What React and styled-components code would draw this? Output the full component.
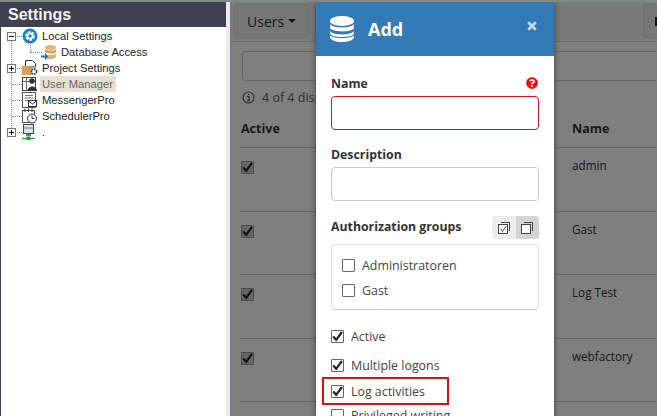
import React from 'react'
import styled, { createGlobalStyle } from 'styled-components'
import { FaQuestionCircle } from 'react-icons/fa'

const Global = createGlobalStyle`
    html, body {
        margin:0;
        padding:0;
        overflow:hidden;
        background-color:#fff;
    }
`

// Page frame
const Page = styled.div`
    width:657px;
    height:416px;
    overflow:hidden;
    display:flex;
    flex-direction:column;
    font-family:"Open Sans", "Liberation Sans", sans-serif;
`
const TopEdge = styled.div`
    height:2px;
    flex:none;
    background-color:#7f8a84;
`
const Body = styled.div`
    flex:1;
    display:flex;
    min-height:0;
`

// Left tree
const Sidebar = styled.aside`
    width:226px;
    flex:none;
    display:flex;
    flex-direction:column;
    background-color:#fff;
    box-sizing:border-box;
    border-left:1px solid #3f4050;
`
const SidebarTitle = styled.h1`
    margin:0;
    height:25px;
    padding-left:7px;
    background-color:#3f4050;
    color:#f2f2f2;
    font:bold 16px/25px "Liberation Sans", sans-serif;
`
const Tree = styled.ul`
    position:relative;
    margin:0;
    padding:1px 0 0;
    list-style:none;
    font:11.2px "Liberation Sans", sans-serif;
    color:#222;
    &::before {
        content:"";
        position:absolute;
        left:10px;
        top:9px;
        height:96px;
        border-left:1px dotted #888;
    }
`
const TreeRow = styled.li`
    position:relative;
    height:16px;
    display:flex;
    align-items:center;
    padding-left:${p => (p.$level ? 40 : 21)}px;
    &::before {
        content:"";
        position:absolute;
        left:${p => (p.$level ? 29 : 11)}px;
        top:8px;
        width:${p => (p.$level ? 12 : 10)}px;
        border-top:1px dotted #888;
    }
    ${p => p.$level ? `
    &::after {
        content:"";
        position:absolute;
        left:29px;
        top:-1px;
        height:9px;
        border-left:1px dotted #888;
    }` : ''}
`
const Toggle = styled.span`
    position:absolute;
    left:6px;
    top:4px;
    z-index:1;
    width:7px;
    height:7px;
    border:1px solid #777;
    background-color:#fff;
    &::before {
        content:"";
        position:absolute;
        left:1px;
        right:1px;
        top:3px;
        height:1px;
        background-color:#111;
    }
    ${p => p.$open ? '' : `
    &::after {
        content:"";
        position:absolute;
        top:1px;
        bottom:1px;
        left:3px;
        width:1px;
        background-color:#111;
    }`}
`
const TreeIcon = styled.svg`
    position:relative;
    width:16px;
    height:16px;
    flex:none;
    margin-right:4px;
`
const TreeLabel = styled.span`
    line-height:16px;
    ${p => p.$selected ? `
    background-color:#e8e0d3;
    color:#666;
    padding:0 3px 0 2px;
    margin-left:-2px;
    ` : ''}
`
const Splitter = styled.div`
    width:4px;
    flex:none;
    background-color:#ebebf3;
    border-right:1px solid #777;
`

// Right pane, dimmed by the dialog backdrop
const Main = styled.main`
    position:relative;
    flex:1;
    min-width:0;
    overflow:hidden;
    background-color:#fff;
    color:#333;
`
const Backdrop = styled.div`
    position:absolute;
    inset:0;
    background-color:rgba(0,0,0,0.5);
`
const Toolbar = styled.div`
    height:40px;
    box-sizing:border-box;
    display:flex;
    gap:6px;
    padding:2px 0 0 3px;
    background-color:#f4f4f4;
    border-bottom:1px solid #ddd;
`
const ToolButton = styled.div`
    height:34px;
    box-sizing:border-box;
    display:flex;
    align-items:center;
    gap:4px;
    padding:0 12px;
    font-size:14px;
    background-color:#eee;
    border:1px solid #ddd;
    border-radius:4px;
`
const EdgeButton = styled(ToolButton)`
    width:14px;
    margin-left:auto;
    padding:0 0 0 11px;
    border-right:0;
    border-radius:4px 0 0 4px;
`
const EdgeGlyph = styled.span`
    flex:none;
    width:3px;
    height:9px;
    background-color:#222;
`
const Caret = styled.span`
    width:0;
    height:0;
    border-left:4px solid transparent;
    border-right:4px solid transparent;
    border-top:4px solid #333;
`
const Content = styled.div`
    padding:9px 0 0 11px;
`
const Search = styled.div`
    height:30px;
    box-sizing:border-box;
    border:1px solid #ccc;
    border-right:0;
    border-radius:4px 0 0 4px;
    background-color:#fff;
`
const Info = styled.div`
    display:flex;
    align-items:center;
    gap:7px;
    height:16px;
    margin-top:8px;
    font-size:12.5px;
    color:#55606b;
`
const Grid = styled.div`
    margin:16px 0 0 -2px;
    display:grid;
    grid-template-columns:331px 1fr;
`
const HeadCell = styled.div`
    height:26px;
    padding:0 0 0 1px;
    font-weight:700;
    font-size:12.5px;
    line-height:16px;
    color:#333;
    border-bottom:1px solid #ccc;
`
const Cell = styled.div`
    height:63.5px;
    box-sizing:border-box;
    padding:${p => p.$text ? 11 : 13}px 0 0 1px;
    font-size:11.7px;
    line-height:13px;
    border-bottom:1px solid #ccc;
    color:#333;
`

// Dialog
const Dialog = styled.section`
    position:absolute;
    left:85px;
    top:0;
    width:238px;
    height:420px;
    background-color:#fff;
    box-shadow:0 0 6px rgba(0,0,0,0.5);
    color:#333;
`
const DialogHead = styled.header`
    position:relative;
    height:54px;
    display:flex;
    align-items:center;
    gap:14px;
    padding:0 0 0 14px;
    background-color:#337ab7;
    color:#fff;
    font-size:18px;
    font-weight:700;
`
const Close = styled.svg`
    position:absolute;
    left:211px;
    top:19px;
    width:10px;
    height:10px;
`
const DialogBody = styled.div`
    padding:17px 15px 0;
`
const Label = styled.label`
    display:flex;
    align-items:center;
    justify-content:space-between;
    height:20px;
    font-size:12.3px;
    font-weight:700;
    color:#333;
`
const Help = styled.span`
    display:flex;
    color:#f00;
    font-size:12px;
    margin-right:1px;
`
const Field = styled.div`
    height:34px;
    box-sizing:border-box;
    margin:3px 0 ${p => p.$gap}px;
    border:1px solid ${p => p.$invalid ? '#c9171e' : '#ccc'};
    border-radius:4px;
    background-color:#fff;
`
const GroupHead = styled.div`
    display:flex;
    align-items:center;
    justify-content:space-between;
    height:23px;
    ${Label} {
        margin-top:-2px;
    }
`
const ToggleGroup = styled.div`
    display:flex;
    width:47px;
    height:23px;
`
const ToggleButton = styled.span`
    flex:1;
    display:flex;
    align-items:center;
    justify-content:center;
    background-color:${p => p.$on ? '#d4d4d4' : '#ececec'};
    border-radius:${p => p.$on ? '0 3px 3px 0' : '3px 0 0 3px'};
`
const GroupBox = styled.div`
    margin:5px 0 20px;
    height:66px;
    box-sizing:border-box;
    padding:14px 0 0 10px;
    border:1px solid #ddd;
    border-bottom-color:#ccc;
    border-radius:4px;
    display:flex;
    flex-direction:column;
    gap:12px;
`
const Option = styled.div`
    position:relative;
    display:flex;
    align-items:center;
    gap:7px;
    height:13px;
    font-size:12.4px;
    color:#444;
    margin-bottom:${p => p.$gap || 0}px;
`
const Box = styled.span`
    flex:none;
    width:13px;
    height:13px;
    box-sizing:border-box;
    border:1px solid ${p => p.$disabled ? '#999' : '#666'};
    border-radius:1px;
    background-color:${p => p.$disabled ? '#cfcfcf' : '#fff'};
    display:flex;
    align-items:center;
    justify-content:center;
`
const Highlight = styled.span`
    position:absolute;
    left:-9px;
    top:-8px;
    width:127px;
    height:28px;
    box-sizing:border-box;
    border:2px solid #c9171e;
`

const Check = () => (
    <svg width="11" height="11" viewBox="0 0 11 11">
        <path d="M1.2 5.4 L4.2 8.8 L9.9 1" fill="none" stroke="#222" strokeWidth="2.2" />
    </svg>
)

const CheckBox = ({ checked, disabled }) => <Box $disabled={disabled}>{checked && <Check />}</Box>

const CopyIcon = ({ checked }) => (
    <svg width="14" height="14" viewBox="0 0 14 14" fill="none" stroke="#444" strokeWidth="1">
        <rect x="1.5" y="3.5" width="9" height="9" fill="#fff" />
        <path d="M4 1.5 H12.5 V10" />
        {checked && <path d="M3.5 8 L5.5 10.5 L9 5.5" />}
    </svg>
)

const InfoIcon = () => (
    <svg width="13" height="13" viewBox="0 0 13 13" fill="none" stroke="#55606b">
        <circle cx="6.5" cy="6.5" r="5.5" strokeWidth="1.2" />
        <path d="M5 5.5 H7 V9.5 M5 9.7 H8 M6.5 3 V4" strokeWidth="1.2" />
    </svg>
)

const DatabaseIcon = () => (
    <svg width="24" height="26" viewBox="0 0 24 26" fill="#fff">
        <ellipse cx="12" cy="5" rx="12" ry="5" />
        <path d="M0 8 C2 12.5 22 12.5 24 8 V12 C22 16.5 2 16.5 0 12 Z" />
        <path d="M0 15 C2 19.5 22 19.5 24 15 V17 C24 20 18 21 12 21 C6 21 0 20 0 17 Z" />
        <path d="M0 19.5 C3 23 21 23 24 19.5 V21 C24 24 18 26 12 26 C6 26 0 24 0 21 Z" />
    </svg>
)

const icons = {
    gear: (
        <>
            <circle cx="8" cy="8" r="7.5" fill="#1c7fc4" />
            <circle cx="8" cy="8" r="3.6" fill="none" stroke="#fff" strokeWidth="2.4" strokeDasharray="2.6 1" />
            <circle cx="8" cy="8" r="2.4" fill="none" stroke="#fff" strokeWidth="1.4" />
        </>
    ),
    db: (
        <>
            <ellipse cx="9.5" cy="3.5" rx="5.5" ry="2.5" fill="#e3b26b" />
            <path d="M4 5 C5 7 14 7 15 5 V8 C14 10 5 10 4 8 Z" fill="#d9a054" />
            <path d="M4 9.5 C5 11.5 14 11.5 15 9.5 V13 C14 15.5 7 15.5 6 15 V10.5 Z" fill="#e3b26b" />
            <path d="M0 11.5 H4 V9 L7.5 12.5 L4 16 V13.5 H0 Z" fill="#1c7fc4" />
        </>
    ),
    project: (
        <>
            <path d="M3.5 0.5 H10.5 L13.5 3.5 V7 H3.5 Z" fill="#fff" stroke="#333" />
            <path d="M0 6 H6 L7 8 H10 V15 H0 Z" fill="#d9a054" />
            <circle cx="12" cy="11.5" r="2.6" fill="none" stroke="#444" strokeWidth="1.8" strokeDasharray="1.6 .8" />
        </>
    ),
    user: (
        <>
            <rect x="0.5" y="1.5" width="13" height="13" fill="#fff" stroke="#444" />
            <path d="M1 5.5 H13 M4.5 2 V15" stroke="#666" />
            <circle cx="10" cy="5" r="2.8" fill="#333" />
            <path d="M5.5 15 C5.5 9 15 9 15 15 Z" fill="#333" />
        </>
    ),
    messenger: (
        <>
            <rect x="0.5" y="0.5" width="13" height="15" fill="#fff" stroke="#555" />
            <path d="M3 3.5 H11 M3 6 H11 M3 8.5 H6" stroke="#777" />
            <rect x="6.5" y="8.5" width="8" height="6" fill="#fff" stroke="#333" />
            <path d="M6.5 9 L10.5 12 L14.5 9" fill="none" stroke="#333" />
        </>
    ),
    scheduler: (
        <>
            <rect x="0.5" y="2.5" width="12" height="12" fill="#fff" stroke="#555" />
            <path d="M3 0.5 V4 M6.5 0.5 V4 M10 0.5 V4" stroke="#333" />
            <circle cx="10" cy="10.5" r="4.5" fill="#fff" stroke="#333" />
            <path d="M10 7.5 V10.5 H12.5" fill="none" stroke="#333" />
        </>
    ),
    computer: (
        <>
            <rect x="1.5" y="0.5" width="10" height="9" fill="#dfe3e8" stroke="#444" />
            <path d="M2 4 H11" stroke="#777" />
            <path d="M4 10 H9 V12 H4 Z" fill="#777" />
            <path d="M0 14.5 H13" stroke="#22a03a" strokeWidth="1.4" />
            <rect x="4.5" y="12.5" width="4" height="3.5" fill="#22a03a" />
        </>
    )
}

const tree = [
    { label: 'Local Settings', icon: 'gear', toggle: 'open' },
    { label: 'Database Access', icon: 'db', level: 1 },
    { label: 'Project Settings', icon: 'project', toggle: 'closed' },
    { label: 'User Manager', icon: 'user', selected: true },
    { label: 'MessengerPro', icon: 'messenger' },
    { label: 'SchedulerPro', icon: 'scheduler' },
    { label: '.', icon: 'computer', toggle: 'closed' }
]

const users = ['admin', 'Gast', 'Log Test', 'webfactory']

export default () => {
    return (
        <Page>
            <Global />
            <TopEdge />
            <Body>
                <Sidebar>
                    <SidebarTitle>Settings</SidebarTitle>
                    <Tree>
                        {tree.map(({ label, icon, toggle, level, selected }) => (
                            <TreeRow key={label} $level={level}>
                                {toggle && <Toggle $open={toggle === 'open'} />}
                                <TreeIcon viewBox="0 0 16 16">{icons[icon]}</TreeIcon>
                                <TreeLabel $selected={selected}>{label}</TreeLabel>
                            </TreeRow>
                        ))}
                    </Tree>
                </Sidebar>
                <Splitter />
                <Main>
                    <Toolbar>
                        <ToolButton>Users <Caret /></ToolButton>
                        <ToolButton />
                        <EdgeButton><EdgeGlyph /></EdgeButton>
                    </Toolbar>
                    <Content>
                        <Search />
                        <Info><InfoIcon /> 4 of 4 displayed</Info>
                        <Grid>
                            <HeadCell>Active</HeadCell>
                            <HeadCell>Name</HeadCell>
                            {users.map(name => (
                                <React.Fragment key={name}>
                                    <Cell><CheckBox checked disabled /></Cell>
                                    <Cell $text>{name}</Cell>
                                </React.Fragment>
                            ))}
                        </Grid>
                    </Content>
                    <Backdrop />
                    <Dialog>
                        <DialogHead>
                            <DatabaseIcon />
                            Add
                            <Close viewBox="0 0 10 10">
                                <path d="M1.2 1.2 L8.8 8.8 M8.8 1.2 L1.2 8.8" stroke="#c0d9ee" strokeWidth="2.8" />
                            </Close>
                        </DialogHead>
                        <DialogBody>
                            <Label>Name <Help><FaQuestionCircle /></Help></Label>
                            <Field $invalid $gap={14} />
                            <Label>Description</Label>
                            <Field $gap={15} />
                            <GroupHead>
                                <Label>Authorization groups</Label>
                                <ToggleGroup>
                                    <ToggleButton><CopyIcon checked /></ToggleButton>
                                    <ToggleButton $on><CopyIcon /></ToggleButton>
                                </ToggleGroup>
                            </GroupHead>
                            <GroupBox>
                                <Option><CheckBox />Administratoren</Option>
                                <Option><CheckBox />Gast</Option>
                            </GroupBox>
                            <Option $gap={16}><CheckBox checked />Active</Option>
                            <Option $gap={13}><CheckBox checked />Multiple logons</Option>
                            <Option $gap={11}><CheckBox checked />Log activities<Highlight /></Option>
                            <Option><CheckBox />Privileged writing</Option>
                        </DialogBody>
                    </Dialog>
                </Main>
            </Body>
        </Page>
    )
}
